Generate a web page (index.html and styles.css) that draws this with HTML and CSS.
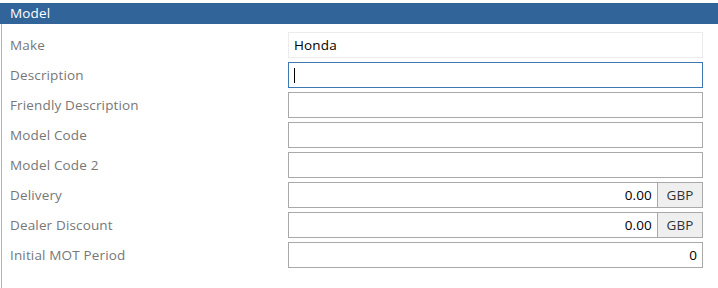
FILE: index.html
```html
<!DOCTYPE html>
<html>
<head>
<meta charset="utf-8">
<link rel="stylesheet" href="styles.css">
</head>
<body>
<div class="panel">
  <div class="panel-header">Model</div>
  <div class="panel-body">
    <div class="row">
      <div class="label">Make</div>
      <div class="field readonly"><span class="value">Honda</span></div>
    </div>
    <div class="row">
      <div class="label">Description</div>
      <div class="field focused"><span class="caret"></span></div>
    </div>
    <div class="row">
      <div class="label">Friendly Description</div>
      <div class="field"></div>
    </div>
    <div class="row">
      <div class="label">Model Code</div>
      <div class="field"></div>
    </div>
    <div class="row">
      <div class="label">Model Code 2</div>
      <div class="field"></div>
    </div>
    <div class="row">
      <div class="label">Delivery</div>
      <div class="group">
        <div class="field num">0.00</div>
        <div class="addon">GBP</div>
      </div>
    </div>
    <div class="row">
      <div class="label">Dealer Discount</div>
      <div class="group">
        <div class="field num">0.00</div>
        <div class="addon">GBP</div>
      </div>
    </div>
    <div class="row">
      <div class="label">Initial MOT Period</div>
      <div class="field num">0</div>
    </div>
  </div>
</div>
</body>
</html>
```
FILE: styles.css
```css
html, body {
  margin: 0;
  padding: 0;
  background: #ffffff;
}
body {
  font-family: "Open Sans", "Noto Sans", "Liberation Sans", sans-serif;
  font-size: 13.5px;
  letter-spacing: 0.15px;
  width: 718px;
  height: 288px;
  overflow: hidden;
}
.panel {
  padding-top: 3px;
}
.panel-header {
  background: #31659a;
  color: #ffffff;
  height: 21px;
  line-height: 20px;
  padding-left: 10px;
}
.panel-body {
  margin-left: 1px;
  border-left: 1px solid #b4b4b4;
  padding: 8px 15px 30px 0;
  display: flex;
  flex-direction: column;
  gap: 4px;
}
.row {
  display: grid;
  grid-template-columns: 286px 415px;
  height: 26px;
  align-items: center;
}
.label {
  padding-left: 8px;
  color: #777777;
}
.field {
  box-sizing: border-box;
  height: 26px;
  border: 1px solid #a9a9a9;
  background: #ffffff;
  color: #000000;
  display: flex;
  align-items: center;
  padding: 0 5px;
}
.field.readonly {
  border-color: #ececec;
}
.field.focused {
  border-color: #3e78b2;
}
.caret {
  display: block;
  width: 1px;
  height: 15px;
  background: #000000;
}
.field.num {
  justify-content: flex-end;
}
.group {
  display: flex;
  height: 26px;
}
.group .field {
  flex: 1;
  border-right: none;
}
.addon {
  box-sizing: border-box;
  width: 46px;
  height: 26px;
  border: 1px solid #a9a9a9;
  background: #efefef;
  color: #333333;
  display: flex;
  align-items: center;
  justify-content: center;
}
```
